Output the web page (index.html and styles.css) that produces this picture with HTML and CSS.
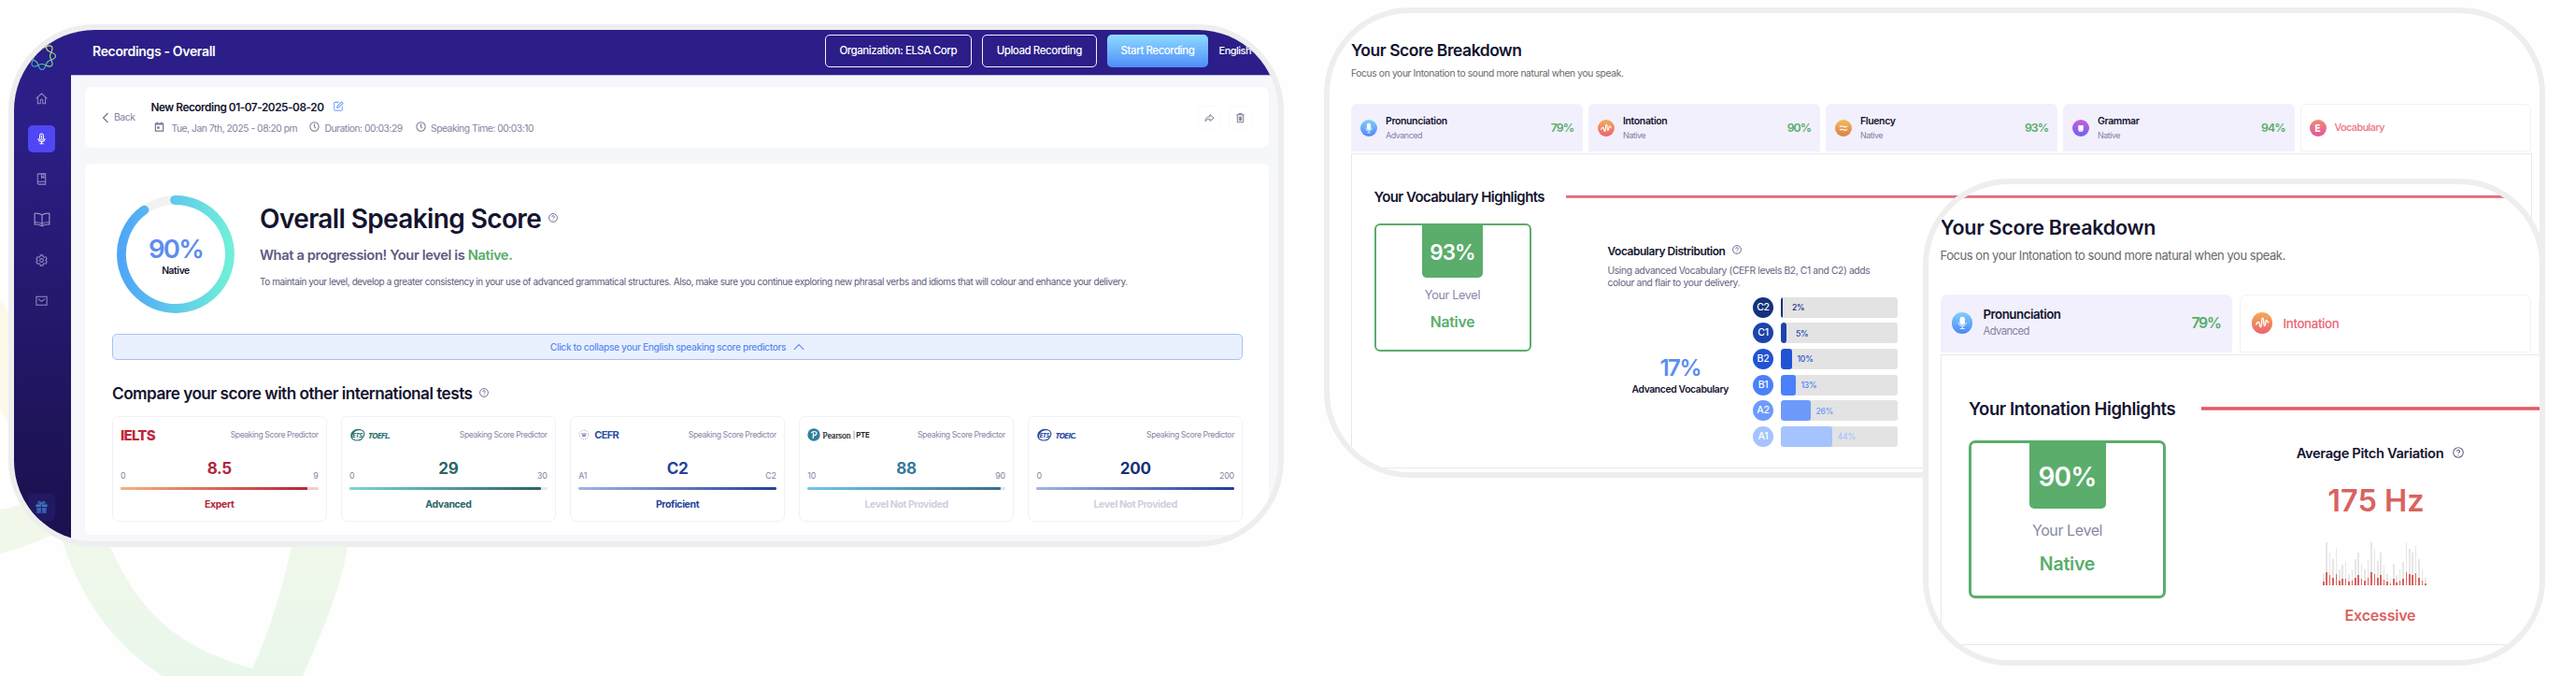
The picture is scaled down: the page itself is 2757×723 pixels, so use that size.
FILE: index.html
```html
<!DOCTYPE html>
<html lang="en">
<head>
<meta charset="utf-8">
<title>Recordings - Overall</title>
<link rel="stylesheet" href="styles.css">
</head>
<body>
<svg width="0" height="0" class="defs" aria-hidden="true">
  <defs>
    <linearGradient id="ring" x1="0" y1="0" x2="1" y2="0"><stop offset="0" stop-color="#4ea6f8"/><stop offset="1" stop-color="#70efda"/></linearGradient>
    <linearGradient id="petal" x1="0" y1="530" x2="0" y2="723" gradientUnits="userSpaceOnUse"><stop offset="0" stop-color="#f2f8e9"/><stop offset="1" stop-color="#e9f7eb"/></linearGradient>
    <linearGradient id="flower" x1="0" y1="0" x2="0" y2="1"><stop offset="0" stop-color="#c3e66a"/><stop offset=".5" stop-color="#7fd08a"/><stop offset="1" stop-color="#2f9bd0"/></linearGradient>
    <linearGradient id="gift" x1="0" y1="0" x2="0" y2="1"><stop offset="0" stop-color="#3f7fc4"/><stop offset="1" stop-color="#3552a8"/></linearGradient>
    <symbol id="help" viewBox="0 0 12 12"><circle cx="6" cy="6" r="5.3" fill="none" stroke="currentColor" stroke-width="1.1"/><path d="M4.5 4.8a1.5 1.5 0 1 1 2.2 1.3c-.5.3-.7.5-.7 1M6 8.200v1" fill="none" stroke="currentColor" stroke-width="1.1"/></symbol>
    <symbol id="clock" viewBox="0 0 12 12"><circle cx="6" cy="6" r="5.1" fill="none" stroke="currentColor" stroke-width="1.1"/><path d="M6 2.8V6l1.6 1.9" fill="none" stroke="currentColor" stroke-width="1.1"/></symbol>
    <symbol id="mic-solid" viewBox="0 0 18 18"><rect x="6.8" y="3.8" width="4.4" height="7.2" rx="2.2" fill="#fff"/><path d="M5.6 8.6a3.4 3.4 0 0 0 6.8 0M9 12v2M7 14h4" fill="none" stroke="#fff" stroke-opacity=".85" stroke-width=".8"/></symbol>
    <symbol id="wave" viewBox="0 0 18 18"><path d="M3.800 10.500C4.500 8.600 6 7.600 6.500 9.200C6.900 10.500 6.700 12.600 7.600 12.600C8.900 12.600 8 5 9.300 5C10.600 5 9.900 11.600 11 11.600C12 11.600 11.600 6.800 12.500 6.800C13.200 6.800 13.300 8.600 14.200 8.600" fill="none" stroke="#fff" stroke-width="1.100" stroke-linecap="round"/></symbol>
    <symbol id="ets-ring" viewBox="0 0 18 16"><path d="M13 2.200C8-.2 1.500 3 1.300 8.500 1.200 14 9 15.500 14 12M3 12.500C.2 8 4.500 1.600 11 1.800c6 .3 7 6.400 2.500 9.700" fill="none" stroke="currentColor" stroke-width="1.200"/></symbol>
  </defs>
</svg>

<svg class="backdrop" viewBox="0 0 400 723" width="400" height="723" aria-hidden="true">
  <path d="M0 322Q8 330 14 345V460Q6 448 0 437Z" fill="#fcf7e8"/>
  <path d="M0 545Q14 543 27 537L80 510V560Q40 582 0 592Z" fill="url(#petal)"/>
  <path d="M64 570C85 640 122 690 174 723H324C350 665 366 625 375 570H315C304 625 290 672 270 715C190 692 145 655 112 570Z" fill="url(#petal)"/>
</svg>

<main class="stage">
  <section class="frame frame-overall">
    <nav class="sidebar">
      <svg class="brand" viewBox="-16 -16 32 32"><g fill="none" stroke="url(#flower)" stroke-width="1.200"><path d="M14.500 0C14.500 4 8.500 3.500 6 6C3.500 8.500 4 14.500 0 14.500C-4 14.500-3.500 8.500-6 6C-8.500 3.500-14.500 4-14.500 0C-14.500-4-8.500-3.500-6-6C-3.500-8.500-4-14.500 0-14.500C4-14.500 3.500-8.500 6-6C8.500-3.500 14.500-4 14.500 0Z"/><path transform="rotate(45)" d="M14.500 0C14.500 4 8.500 3.500 6 6C3.500 8.500 4 14.500 0 14.500C-4 14.500-3.500 8.500-6 6C-8.500 3.500-14.500 4-14.500 0C-14.500-4-8.500-3.500-6-6C-3.500-8.500-4-14.500 0-14.500C4-14.500 3.500-8.500 6-6C8.500-3.500 14.500-4 14.500 0Z"/></g></svg>
      <a class="nav-item"><svg viewBox="0 0 16 16"><path d="M1.800 7.800 8 2.200l6.200 5.600M3.600 6.600v7h3v-3.400a1.400 1.400 0 0 1 2.800 0v3.400h3v-7"/></svg></a>
      <a class="nav-item active"><svg viewBox="0 0 16 16"><rect x="6" y="2.200" width="4" height="7.400" rx="2"/><path d="M4.200 7.500a3.800 3.800 0 0 0 7.600 0M8 11.400v2.200M5.800 13.700h4.400M8 4v4"/></svg></a>
      <a class="nav-item"><svg viewBox="0 0 16 16"><path d="M3.500 12.300V3a1 1 0 0 1 1-1h8v12h-7.500a1.500 1.500 0 0 1-1.500-1.700c0-.9.600-1.300 1.500-1.300h7.500M8 2v4.600l1.300-1 1.300 1V2"/></svg></a>
      <a class="nav-item wide"><svg viewBox="0 0 16 16"><path d="M8 3.400C6 2 3.500 1.800 1 2v10.500c2.500-.2 5 .2 7 1.500 2-1.300 4.500-1.700 7-1.500V2c-2.500-.2-5 0-7 1.400ZM8 3.400V14M1 10.500c2.500-.2 5 .2 7 1.300 2-1.100 4.500-1.500 7-1.300"/></svg></a>
      <a class="nav-item"><svg viewBox="0 0 16 16"><path d="M6.700 2h2.600l.5 1.800 1.200.700 1.800-.5 1.300 2.300-1.300 1.200v1l1.300 1.200-1.300 2.300-1.800-.5-1.200.700-.5 1.800H6.700l-.5-1.800-1.200-.7-1.800.5-1.300-2.300 1.300-1.200v-1L1.900 6.300 3.200 4l1.800.5 1.200-.7Z"/><circle cx="8" cy="8" r="2"/></svg></a>
      <a class="nav-item"><svg viewBox="0 0 16 16"><path d="M2 3.500h12v9.500H2ZM4 6l4 3 4-3M2 3.500v3M14 3.500v3"/></svg></a>
      <a class="nav-item gift"><svg viewBox="0 0 16 16"><path d="M1.500 4.800h6v3h-6zM8.500 4.800h6v3h-6zM2.500 8.800h5V15h-5zM8.500 8.800h5V15h-5z" fill="url(#gift)"/><path d="M8 4.300C6.800 1 3.800 1 4.200 3.200c.2.900 2 1.100 3.800 1.100s3.600-.2 3.800-1.100C12.200 1 9.200 1 8 4.300Z" stroke="#3f7fc4"/></svg></a>
    </nav>
    <div class="main">
      <header class="topbar">
        <h1 class="topbar-title">Recordings - Overall</h1>
        <div class="topbar-actions">
          <button class="btn btn-org">Organization: ELSA Corp</button>
          <button class="btn btn-upload">Upload Recording</button>
          <button class="btn btn-start">Start Recording</button>
          <span class="lang">English</span>
        </div>
      </header>
      <div class="content">
        <div class="card rec">
          <a class="back"><svg viewBox="0 0 8 12"><path d="M6.500 1 1.500 6l5 5"/></svg>Back</a>
          <div class="rec-info">
            <div class="rec-name">New Recording 01-07-2025-08-20
              <svg class="edit" viewBox="0 0 12 12"><path d="M6 1.500H1.800a1 1 0 0 0-1 1v7.700a1 1 0 0 0 1 1h7.400a1 1 0 0 0 1-1V6M4 8l.5-2.200L9.300 1l1.600 1.600L6.200 7.400Z"/></svg>
            </div>
            <div class="rec-meta">
              <span class="meta m-date"><svg viewBox="0 0 12 12"><path d="M1.500 2.200h9V11h-9zM1.500 3.200h9M3.500.5v2M8.500.5v2" fill="none" stroke="currentColor" stroke-width="1.300"/><path d="M3.500 5.800h2.700v2.700H3.500z" fill="currentColor"/></svg>Tue, Jan 7th, 2025 - 08:20 pm</span>
              <span class="meta m-dur"><svg><use href="#clock"/></svg>Duration: 00:03:29</span>
              <span class="meta"><svg><use href="#clock"/></svg>Speaking Time: 00:03:10</span>
            </div>
          </div>
          <div class="rec-tools">
            <span class="tool"><svg viewBox="0 0 12 12"><path d="M1.200 10C1.200 6.500 3 4.500 6.600 4.500V2.200L11 6.100 6.600 9.800V7.400C4 7.400 2.300 8 1.200 10Z" fill="none" stroke="currentColor"/></svg></span>
            <span class="tool"><svg viewBox="0 0 12 12"><path d="M1.500 2.500h9M4.300 2.300V1h3.400v1.300M2.500 2.800v8.400h7V2.800M4.700 4.500v5M6 4.500v5M7.300 4.500v5" fill="none" stroke="currentColor"/></svg></span>
          </div>
        </div>
        <div class="card score">
          <div class="hero">
            <div class="gauge">
              <svg viewBox="0 0 126 126"><circle cx="63" cy="63" r="58" fill="none" stroke="#f2f2f3" stroke-width="9.500"/><path d="M62 5A58 58 0 1 1 29.500 15.600" fill="none" stroke="url(#ring)" stroke-width="9.800" stroke-linecap="round"/></svg>
              <div class="gauge-label"><strong>90%</strong><span>Native</span></div>
            </div>
            <div class="hero-text">
              <h2>Overall Speaking Score<svg class="help"><use href="#help"/></svg></h2>
              <p class="lead">What a progression! Your level is <b>Native.</b></p>
              <p class="advice">To maintain your level, develop a greater consistency in your use of advanced grammatical structures. Also, make sure you continue exploring new phrasal verbs and idioms that will colour and enhance your delivery.</p>
            </div>
          </div>
          <button class="collapse">Click to collapse your English speaking score predictors<svg viewBox="0 0 12 8"><path d="M.8 6.800 6 1.500l5.200 5.300" fill="none" stroke="currentColor" stroke-width="1.100"/></svg></button>
          <h3 class="compare">Compare your score with other international tests<svg class="help"><use href="#help"/></svg></h3>
          <div class="tests">
            <article class="test ielts">
              <div class="test-head"><span class="logo-ielts">IELTS</span><small>Speaking Score Predictor</small></div>
              <div class="test-score"><i>0</i><b>8.5</b><i>9</i></div>
              <div class="bar"><span style="width:94.500%"></span></div>
              <p>Expert</p>
            </article>
            <article class="test toefl">
              <div class="test-head"><span class="ets"><svg><use href="#ets-ring"/></svg><em class="ets-in">ETS</em><em class="ets-name">TOEFL.</em></span><small>Speaking Score Predictor</small></div>
              <div class="test-score"><i>0</i><b>29</b><i>30</i></div>
              <div class="bar"><span style="width:96.700%"></span></div>
              <p>Advanced</p>
            </article>
            <article class="test cefr">
              <div class="test-head"><span class="logo-cefr"><svg viewBox="0 0 12 12"><circle cx="6" cy="6" r="4.800" fill="none" stroke="#8d90b8" stroke-width="1" stroke-dasharray="1 1.500"/><path d="M3.200 5h5.600M3.800 6.300h4.400M4.300 7.500h3.400" stroke="#7d81b5" stroke-width="1"/></svg>CEFR</span><small>Speaking Score Predictor</small></div>
              <div class="test-score"><i>A1</i><b>C2</b><i>C2</i></div>
              <div class="bar"><span style="width:100%"></span></div>
              <p>Proficient</p>
            </article>
            <article class="test pte">
              <div class="test-head"><span class="logo-pte"><svg viewBox="0 0 14 14"><circle cx="7" cy="7" r="6.700" fill="#2f7f9d"/><path d="M4.200 5.300C5 3.200 10 2.600 10 5.400 10 7.500 7.300 7.900 6.300 7.500M6.600 4.600 6.200 11" fill="none" stroke="#fff" stroke-width="1.200"/></svg><span class="pearson">Pearson</span><span class="pte-txt"><u>|</u>PTE</span></span><small>Speaking Score Predictor</small></div>
              <div class="test-score"><i>10</i><b>88</b><i>90</i></div>
              <div class="bar"><span style="width:97.500%"></span></div>
              <p class="muted">Level Not Provided</p>
            </article>
            <article class="test toeic">
              <div class="test-head"><span class="ets"><svg><use href="#ets-ring"/></svg><em class="ets-in">ETS</em><em class="ets-name">TOEIC.</em></span><small>Speaking Score Predictor</small></div>
              <div class="test-score"><i>0</i><b>200</b><i>200</i></div>
              <div class="bar"><span style="width:100%"></span></div>
              <p class="muted">Level Not Provided</p>
            </article>
          </div>
        </div>
      </div>
    </div>
  </section>

  <section class="frame frame-vocab">
    <h2 class="bd-title">Your Score Breakdown</h2>
    <p class="bd-sub">Focus on your Intonation to sound more natural when you speak.</p>
    <div class="tabs">
      <div class="tab"><svg class="ico blue"><use href="#mic-solid"/></svg><div class="tab-txt"><b>Pronunciation</b><span>Advanced</span></div><strong>79%</strong></div>
      <div class="tab"><svg class="ico coral"><use href="#wave"/></svg><div class="tab-txt"><b>Intonation</b><span>Native</span></div><strong>90%</strong></div>
      <div class="tab"><svg class="ico amber" viewBox="0 0 18 18"><path d="M5 7.800c1.300-1.600 2.600-1.300 4-.5s2.600 1 4-.4M5 11.300c1.300-1.600 2.600-1.300 4-.5s2.600 1 4-.4" fill="none" stroke="#fff" stroke-width="1.100"/></svg><div class="tab-txt"><b>Fluency</b><span>Native</span></div><strong>93%</strong></div>
      <div class="tab"><svg class="ico violet" viewBox="0 0 18 18"><path d="M6.300 6h5.400v5.800H6.300zM7 12.300h4v.6H7z" fill="#fff"/></svg><div class="tab-txt"><b>Grammar</b><span>Native</span></div><strong>94%</strong></div>
      <div class="tab open"><span class="ico pink">E</span><em class="tab-open">Vocabulary</em></div>
    </div>
    <div class="panel">
      <div class="hl"><h3>Your Vocabulary Highlights</h3><span class="rule"></span></div>
      <div class="row">
        <div class="level"><strong>93%</strong><span>Your Level</span><b>Native</b></div>
        <div class="dist">
          <h4>Vocabulary Distribution<svg class="help"><use href="#help"/></svg></h4>
          <p>Using advanced Vocabulary (CEFR levels B2, C1 and C2) adds<br>colour and flair to your delivery.</p>
          <div class="dist-body">
            <div class="adv"><strong>17%</strong><span>Advanced Vocabulary</span></div>
            <div class="chart">
              <div class="lv c2"><b>C2</b><div class="track"><i style="width:2px"></i><span class="far">2%</span></div></div>
              <div class="lv c1"><b>C1</b><div class="track"><i style="width:6px"></i><span class="far">5%</span></div></div>
              <div class="lv b2"><b>B2</b><div class="track"><i style="width:12px"></i><span>10%</span></div></div>
              <div class="lv b1"><b>B1</b><div class="track"><i style="width:16px"></i><span>13%</span></div></div>
              <div class="lv a2"><b>A2</b><div class="track"><i style="width:32px"></i><span>26%</span></div></div>
              <div class="lv a1"><b>A1</b><div class="track"><i style="width:55px"></i><span>44%</span></div></div>
            </div>
          </div>
        </div>
      </div>
    </div>
  </section>

  <section class="frame frame-intonation">
    <div class="peek"></div>
    <h2 class="bd-title">Your Score Breakdown</h2>
    <p class="bd-sub">Focus on your Intonation to sound more natural when you speak.</p>
    <div class="tabs">
      <div class="tab"><svg class="ico blue"><use href="#mic-solid"/></svg><div class="tab-txt"><b>Pronunciation</b><span>Advanced</span></div><strong>79%</strong></div>
      <div class="tab open"><svg class="ico coral"><use href="#wave"/></svg><em class="tab-open">Intonation</em></div>
      <div class="tab"></div>
    </div>
    <div class="panel">
      <div class="hl"><h3>Your Intonation Highlights</h3><span class="rule"></span></div>
      <div class="row">
        <div class="level"><strong>90%</strong><span>Your Level</span><b>Native</b></div>
        <div class="pitch">
          <h4>Average Pitch Variation<svg class="help"><use href="#help"/></svg></h4>
          <strong>175 Hz</strong>
          <div class="bars"><i style="height:12px"></i><i style="height:46px"></i><i style="height:35px"></i><i style="height:28px"></i><i style="height:40px"></i><i style="height:17px"></i><i style="height:22px"></i><i style="height:25px"></i><i style="height:12px"></i><i style="height:17px"></i><i style="height:28px"></i><i style="height:35px"></i><i style="height:23px"></i><i style="height:17px"></i><i style="height:28px"></i><i style="height:46px"></i><i style="height:39px"></i><i style="height:26px"></i><i style="height:35px"></i><i style="height:21px"></i><i style="height:12px"></i><i style="height:8px"></i><i style="height:23px"></i><i style="height:11px"></i><i style="height:17px"></i><i style="height:25px"></i><i style="height:46px"></i><i style="height:39px"></i><i style="height:35px"></i><i style="height:42px"></i><i style="height:28px"></i><i style="height:17px"></i><i style="height:8px"></i></div>
          <span class="verdict">Excessive</span>
        </div>
      </div>
    </div>
  </section>
</main>
</body>
</html>
```
FILE: styles.css
```css
* { box-sizing: border-box; margin: 0; padding: 0; }
body { font-family: Inter, "Liberation Sans", sans-serif; background: #fefefe; width: 2757px; height: 723px; overflow: hidden; position: relative; color: #14142f; }
svg { display: block; flex: none; }
.defs { position: absolute; }
i, em { font-style: normal; }
button { font: inherit; }
h1, h2, h3, h4, p, span, b, strong { white-space: nowrap; }
.backdrop { position: absolute; left: 0; top: 0; }

.stage { position: relative; display: flex; align-items: flex-start; height: 723px; padding: 8px 0 0 9px; }
.frame { border: 6px solid #eee; border-radius: 92px; overflow: hidden; flex: none; background: #fff; }

/* Overall score window */
.frame-overall { width: 1365px; height: 559px; margin-top: 18px; display: flex; background: #f6f7fa; }
.sidebar { width: 61px; flex: none; background: linear-gradient(#2b1e89, #2b1e85 20%, #1d1355 85%, #1b1150); display: flex; flex-direction: column; align-items: center; padding: 12px 2px 0 0; }
.brand { width: 32px; height: 32px; margin-bottom: 15px; }
.nav-item { width: 29px; height: 29px; margin-bottom: 14.200px; border-radius: 5px; display: flex; align-items: center; justify-content: center; color: #938dc4; }
.nav-item svg { width: 15px; height: 15px; fill: none; stroke: currentColor; stroke-width: 1.100; }
.nav-item.wide svg { width: 18px; height: 18px; }
.nav-item.active { background: #4f47f3; color: #fff; }
.nav-item.gift { margin: auto 0 22px; background: #211a62; }
.gift svg { stroke: none; }
.main { flex: 1; min-width: 0; }
.topbar { height: 49px; background: #2b1e89; display: flex; align-items: center; padding: 0 0 4px 23px; border-bottom: 1px solid #b8b3da; color: #fff; }
.topbar-title { font-size: 14px; font-weight: 600; letter-spacing: -.33px; }
.topbar-actions { width: 485px; margin-left: auto; display: flex; align-items: center; gap: 11.500px; }
.btn { height: 35px; border: 1.500px solid #f3f1ff; border-radius: 5px; background: none; color: #fff; font-size: 11.500px; font-weight: 500; letter-spacing: -.44px; flex: none; white-space: nowrap; }
.btn-org { width: 156.500px; }
.btn-upload { width: 122.500px; }
.btn-start { width: 108px; border: 0; background: linear-gradient(#8edcff, #4f8df9); }
.lang { font-size: 11px; font-weight: 500; letter-spacing: -.5px; }
.content { padding: 12px 10px 0 15px; }
.card { background: #fff; border-radius: 7px; }
.rec { height: 65px; display: flex; align-items: center; padding: 0 18px; color: #84829f; }
.back { width: 52.500px; display: flex; align-items: center; font-size: 10.500px; letter-spacing: -.5px; }
.back svg { width: 8px; height: 12px; margin-right: 5px; fill: none; stroke: #6f6d8a; stroke-width: 1.100; }
.rec-name { display: flex; align-items: center; font-size: 11.800px; font-weight: 600; letter-spacing: -.45px; color: #14142f; line-height: 18px; }
.edit { width: 11px; height: 11px; margin: -3px 0 0 10px; fill: none; stroke: #6ea0fa; stroke-width: 1.100; }
.rec-meta { display: flex; margin-top: 4px; font-size: 10.300px; letter-spacing: -.47px; line-height: 18px; }
.meta { display: flex; align-items: center; }
.meta svg { width: 11px; height: 11px; margin: -2px 5.500px 0 0; color: #77758f; }
.m-date { width: 169.500px; }
.m-date svg { margin: -2px 8px 0 3px; }
.m-dur { width: 113.500px; }
.rec-tools { margin-left: auto; display: flex; gap: 8px; }
.tool { width: 25px; height: 26px; border: 1px solid #fafafc; border-radius: 5px; display: grid; place-items: center; color: #6f6d8a; }
.tool svg { width: 11px; height: 12px; }

.score { height: 397px; margin-top: 17px; padding: 34px 28px 0 29px; }
.hero { display: flex; height: 126px; padding-left: 5px; }
.gauge { width: 126px; height: 126px; display: grid; flex: none; }
.gauge > * { grid-area: 1 / 1; }
.gauge-label { display: flex; flex-direction: column; align-items: center; padding-top: 42px; }
.gauge-label strong { font-size: 27.500px; font-weight: 600; letter-spacing: -1.800px; line-height: 30px; color: #5b8def; }
.gauge-label span { font-size: 10.300px; font-weight: 600; letter-spacing: -.4px; line-height: 16px; }
.hero-text { padding: 8px 0 0 27px; }
.hero-text h2 { font-size: 28px; font-weight: 600; letter-spacing: -.62px; line-height: 34px; display: flex; align-items: center; }
.help { width: 10px; height: 10px; color: #66648a; }
.hero-text .help { margin: -2px 0 0 8px; }
.lead { font-size: 14.700px; font-weight: 600; letter-spacing: -.38px; line-height: 20px; margin-top: 11.500px; color: #5d5b80; }
.lead b { font-weight: 600; color: #57ad68; }
.advice { font-size: 10px; letter-spacing: -.415px; line-height: 14px; margin-top: 11px; color: #5d5b7a; }
.collapse { display: flex; align-items: center; justify-content: center; width: 100%; height: 28px; margin-top: 21.500px; background: #eaf1fe; border: 1px solid #a6c3f6; border-radius: 5px; color: #5b8bf5; font-size: 10.200px; font-weight: 500; letter-spacing: -.35px; white-space: nowrap; }
.collapse svg { width: 12px; height: 8px; margin-left: 8px; }
.compare { display: flex; align-items: center; margin-top: 24px; font-size: 17.200px; font-weight: 600; letter-spacing: -.52px; line-height: 24px; }
.compare .help { margin: -2px 0 0 8px; }
.tests { display: grid; grid-template-columns: repeat(5, 1fr); gap: 15.600px; margin-top: 12.500px; }
.test { height: 112.500px; border: 1px solid #f1f0f7; border-radius: 7px; padding: 9px 8px 0; }
.test-head { display: flex; justify-content: space-between; align-items: center; height: 20px; }
.test small { font-size: 8.700px; letter-spacing: -.44px; color: #8987a8; }
.logo-ielts { font-size: 15px; font-weight: 800; letter-spacing: -.75px; color: #c2243a; }
.ets { display: flex; align-items: center; position: relative; }
.ets svg { width: 18px; height: 15px; }
.ets em { font-family: "Open Sans", sans-serif; font-style: italic; font-weight: 700; }
.ets-in { position: absolute; left: 3px; top: 3px; font-size: 7px; line-height: 9px; letter-spacing: -.2px; }
.ets-name { font-size: 9px; letter-spacing: -.85px; margin-left: 2px; }
.logo-cefr { display: flex; align-items: center; font-size: 11px; font-weight: 700; letter-spacing: -.7px; color: #2a4fa8; }
.logo-cefr svg { width: 12px; height: 12px; margin-right: 5px; }
.logo-pte { display: flex; align-items: center; color: #25252b; }
.logo-pte svg { width: 14px; height: 14px; margin-right: 2px; }
.pearson { font: 9.800px "Liberation Serif", serif; letter-spacing: -.1px; -webkit-text-stroke: .2px #25252b; }
.pte-txt { font-size: 7.800px; font-weight: 700; letter-spacing: -.3px; margin-left: 2px; }
.pte-txt u { text-decoration: none; font-weight: 300; margin-right: 1.500px; }
.test-score { display: grid; grid-template-columns: 1fr auto 1fr; height: 24px; margin-top: 16px; color: var(--c); }
.test-score b { font-size: 17px; font-weight: 700; letter-spacing: -.3px; line-height: 20px; }
.test-score i { align-self: end; font-size: 8.800px; line-height: 12px; letter-spacing: -.2px; color: #84829f; }
.test-score i:last-child { text-align: right; }
.bar { height: 3px; margin-top: 6px; background: var(--t); border-radius: 1px; overflow: hidden; }
.bar span { display: block; height: 3px; background: linear-gradient(90deg, var(--a), var(--b)); border-radius: 1px; }
.test p { text-align: center; font-size: 10.500px; font-weight: 700; letter-spacing: -.38px; line-height: 14px; margin-top: 8.500px; color: var(--c); }
.test p.muted { color: #cfcedd; }
.ielts { --c: #b3253a; --a: #f3b57a; --b: #b92237; --t: #f1ccd3; }
.toefl { --c: #2b6566; --a: #78d6dc; --b: #2b6566; --t: #dceef0; }
.cefr { --c: #23439a; --a: #a3b4e6; --b: #23429b; --t: #eee; }
.pte { --c: #36799b; --a: #72c6f0; --b: #34718c; --t: #d8e9f2; }
.toeic { --c: #16307a; --a: #a3b4e6; --b: #1f3d98; --t: #eee; }
.toefl .ets { color: #2b7070; }
.toeic .ets { color: #2a489c; }

/* Score breakdown windows */
.frame-vocab { width: 1307px; height: 502.500px; margin-left: 42.500px; padding: 28px 0 0 23.500px; }
.bd-title { font-size: 17.500px; font-weight: 600; letter-spacing: -.47px; line-height: 24px; }
.bd-sub { font-size: 10.300px; letter-spacing: -.38px; line-height: 16px; margin-top: 4px; color: #696969; }
.tabs { display: flex; gap: 6px; margin-top: 25px; width: 1264px; }
.tab { width: 248px; height: 51px; background: #f2f0fd; border-radius: 6px 6px 0 0; display: flex; align-items: center; padding: 0 10px; flex: none; }
.tab.open { background: #fff; border: 1px solid #f2f1fb; padding: 0 9px; }
.ico { width: 18px; height: 18px; border-radius: 50%; margin-right: 9px; }
.blue { background: linear-gradient(#7fd0fb, #4d86f7); }
.coral { background: linear-gradient(#f3ac55, #ec6270); }
.amber { background: linear-gradient(#f0bd58, #dc7f45); }
.violet { background: linear-gradient(#c95fd8, #6d63ee); }
.pink { background: linear-gradient(#f08a72, #e3559c); color: #fff; font-size: 10px; font-weight: 800; display: grid; place-items: center; }
.tab-txt { display: flex; flex-direction: column; }
.tab-txt b { font-size: 10.500px; font-weight: 600; letter-spacing: -.37px; line-height: 15px; }
.tab-txt span { font-size: 9px; letter-spacing: -.5px; line-height: 15px; color: #8481a3; }
.tab strong { margin-left: auto; font-size: 12.300px; font-weight: 600; letter-spacing: -1px; color: #57ad68; }
.tab-open { font-size: 10.800px; font-weight: 500; letter-spacing: -.52px; color: #ec7180; }
.frame-vocab .tab:nth-child(n+4) { width: 247.500px; }
.frame-vocab .panel { width: 1264px; height: 337px; margin-top: 2px; border: 1px solid #e8e8ea; padding-left: 23.500px; }
.hl { display: flex; align-items: center; }
.hl h3 { font-size: 15px; font-weight: 600; letter-spacing: -.57px; line-height: 22px; }
.rule { height: 3px; background: linear-gradient(#d0608a, #f08a7c); }
.frame-vocab .hl { margin-top: 34.500px; }
.frame-vocab .rule { width: 1010px; margin-left: 23px; }
.row { display: flex; }
.level { width: 168px; height: 137px; border: 2.500px solid #5aad6b; border-radius: 6px; display: flex; flex-direction: column; align-items: center; flex: none; }
.level strong { width: 65px; height: 58px; margin-top: -2px; background: #5aad6b; border-radius: 0 0 5px 5px; color: #fff; font-size: 22.500px; font-weight: 600; letter-spacing: -.9px; line-height: 62px; text-align: center; }
.level span { font-size: 12.700px; letter-spacing: -.35px; line-height: 18px; margin-top: 10px; color: #8a88a9; }
.level b { font-size: 15.700px; font-weight: 600; letter-spacing: -.2px; line-height: 20px; margin-top: 10px; color: #5aad6b; }
.frame-vocab .row { margin-top: 17px; }
.dist { margin-left: 82px; padding-top: 21.500px; width: 311px; }
.dist h4 { display: flex; align-items: center; font-size: 12px; font-weight: 600; letter-spacing: -.47px; line-height: 18px; }
.dist .help { margin: -5px 0 0 8px; }
.dist p { font-size: 10.300px; letter-spacing: -.37px; line-height: 13px; margin-top: 5px; color: #64627f; }
.dist-body { display: flex; margin-top: 8.500px; }
.adv { width: 155.500px; padding: 61px 0 0 0; display: flex; flex-direction: column; align-items: center; }
.adv strong { font-size: 24px; font-weight: 600; letter-spacing: -1.500px; line-height: 30px; color: #5b8def; }
.adv span { font-size: 10.400px; font-weight: 600; letter-spacing: -.39px; line-height: 16px; }
.chart { display: flex; flex-direction: column; gap: 5.700px; }
.lv { display: flex; align-items: center; gap: 8px; }
.lv b { width: 22px; height: 22px; border-radius: 50%; background: var(--l); color: #fff; font-size: 10.500px; font-weight: 500; letter-spacing: -.3px; line-height: 22px; text-align: center; }
.track { width: 125px; height: 22px; background: #e3e3e3; border-radius: 3px; overflow: hidden; display: flex; align-items: center; }
.track i { height: 22px; background: var(--l); border-radius: 3px; flex: none; }
.track span { font-size: 8.600px; font-weight: 500; letter-spacing: -.2px; margin: 1px 0 0 5.500px; color: var(--l); }
.track span.far { margin-left: 10px; }
.c2 { --l: #15317e; } .c1 { --l: #1c43ad; } .b2 { --l: #2153d3; } .b1 { --l: #4a80fb; } .a2 { --l: #6c9bfc; } .a1 { --l: #a5c3fe; }

.frame-intonation { position: absolute; left: 2057.500px; top: 191px; width: 666.500px; height: 521px; padding: 12px 0 0 13px; }
.peek { height: 3px; width: 640px; margin-left: -13px; background: linear-gradient(#d0608a, #f08a7c); }
.frame-intonation .bd-title { font-size: 21.500px; letter-spacing: -.26px; line-height: 30px; margin-top: 16px; }
.frame-intonation .bd-sub { font-size: 13px; letter-spacing: -.46px; line-height: 20px; margin-top: 5px; }
.frame-intonation .tabs { gap: 8px; margin-top: 31.500px; }
.frame-intonation .tab { width: 312px; height: 62px; padding: 0 12px; border-radius: 7px 7px 0 0; }
.frame-intonation .ico { width: 22.500px; height: 22.500px; margin-right: 11.500px; }
.frame-intonation .tab-txt b { font-size: 13.300px; letter-spacing: -.49px; line-height: 18px; }
.frame-intonation .tab-txt span { font-size: 11.300px; letter-spacing: -.6px; line-height: 19px; }
.frame-intonation .tab strong { font-size: 15.800px; letter-spacing: -1.300px; }
.frame-intonation .tab-open { font-size: 13.300px; letter-spacing: -.37px; color: #eb6475; }
.frame-intonation .panel { width: 700px; height: 311px; margin-top: 2.500px; border: 1.500px solid #e8e8ea; padding-left: 29.500px; }
.frame-intonation .hl { margin-top: 43.500px; }
.frame-intonation .hl h3 { font-size: 18.500px; letter-spacing: -.38px; line-height: 26px; }
.frame-intonation .rule { height: 4px; width: 400px; margin-left: 28px; background: linear-gradient(#ec8a62, #e2566f 40%, #e2566f 75%, #f4b4bd); }
.frame-intonation .row { margin-top: 21.500px; }
.frame-intonation .level { width: 211px; height: 169px; border-width: 3px; border-radius: 7px; }
.frame-intonation .level strong { width: 82px; height: 72px; font-size: 28px; letter-spacing: -.9px; line-height: 76px; }
.frame-intonation .level span { font-size: 16px; letter-spacing: -.4px; line-height: 22px; margin-top: 12px; }
.frame-intonation .level b { font-size: 19.500px; letter-spacing: -.2px; line-height: 26px; margin-top: 12px; }
.pitch { width: 200px; margin-left: 129.500px; padding-top: 4px; display: flex; flex-direction: column; align-items: center; }
.pitch h4 { display: flex; align-items: center; font-size: 14.700px; font-weight: 600; letter-spacing: -.34px; line-height: 20px; }
.pitch .help { width: 12px; height: 12px; margin: -2px 0 0 10px; }
.pitch strong { font-size: 32.500px; font-weight: 600; line-height: 40px; margin: 21px 9px 0 0; color: #d9635f; }
.bars { display: flex; align-items: flex-end; justify-content: space-between; width: 111px; height: 47px; margin: 23px 12px 0 0; }
.bars i { width: 1.600px; background: linear-gradient(#e6e6e6 70%, #d9635f 70%); }
.verdict { font-size: 16px; font-weight: 600; letter-spacing: -.2px; line-height: 22px; margin: 21px 0 0; color: #d9635f; }
```
